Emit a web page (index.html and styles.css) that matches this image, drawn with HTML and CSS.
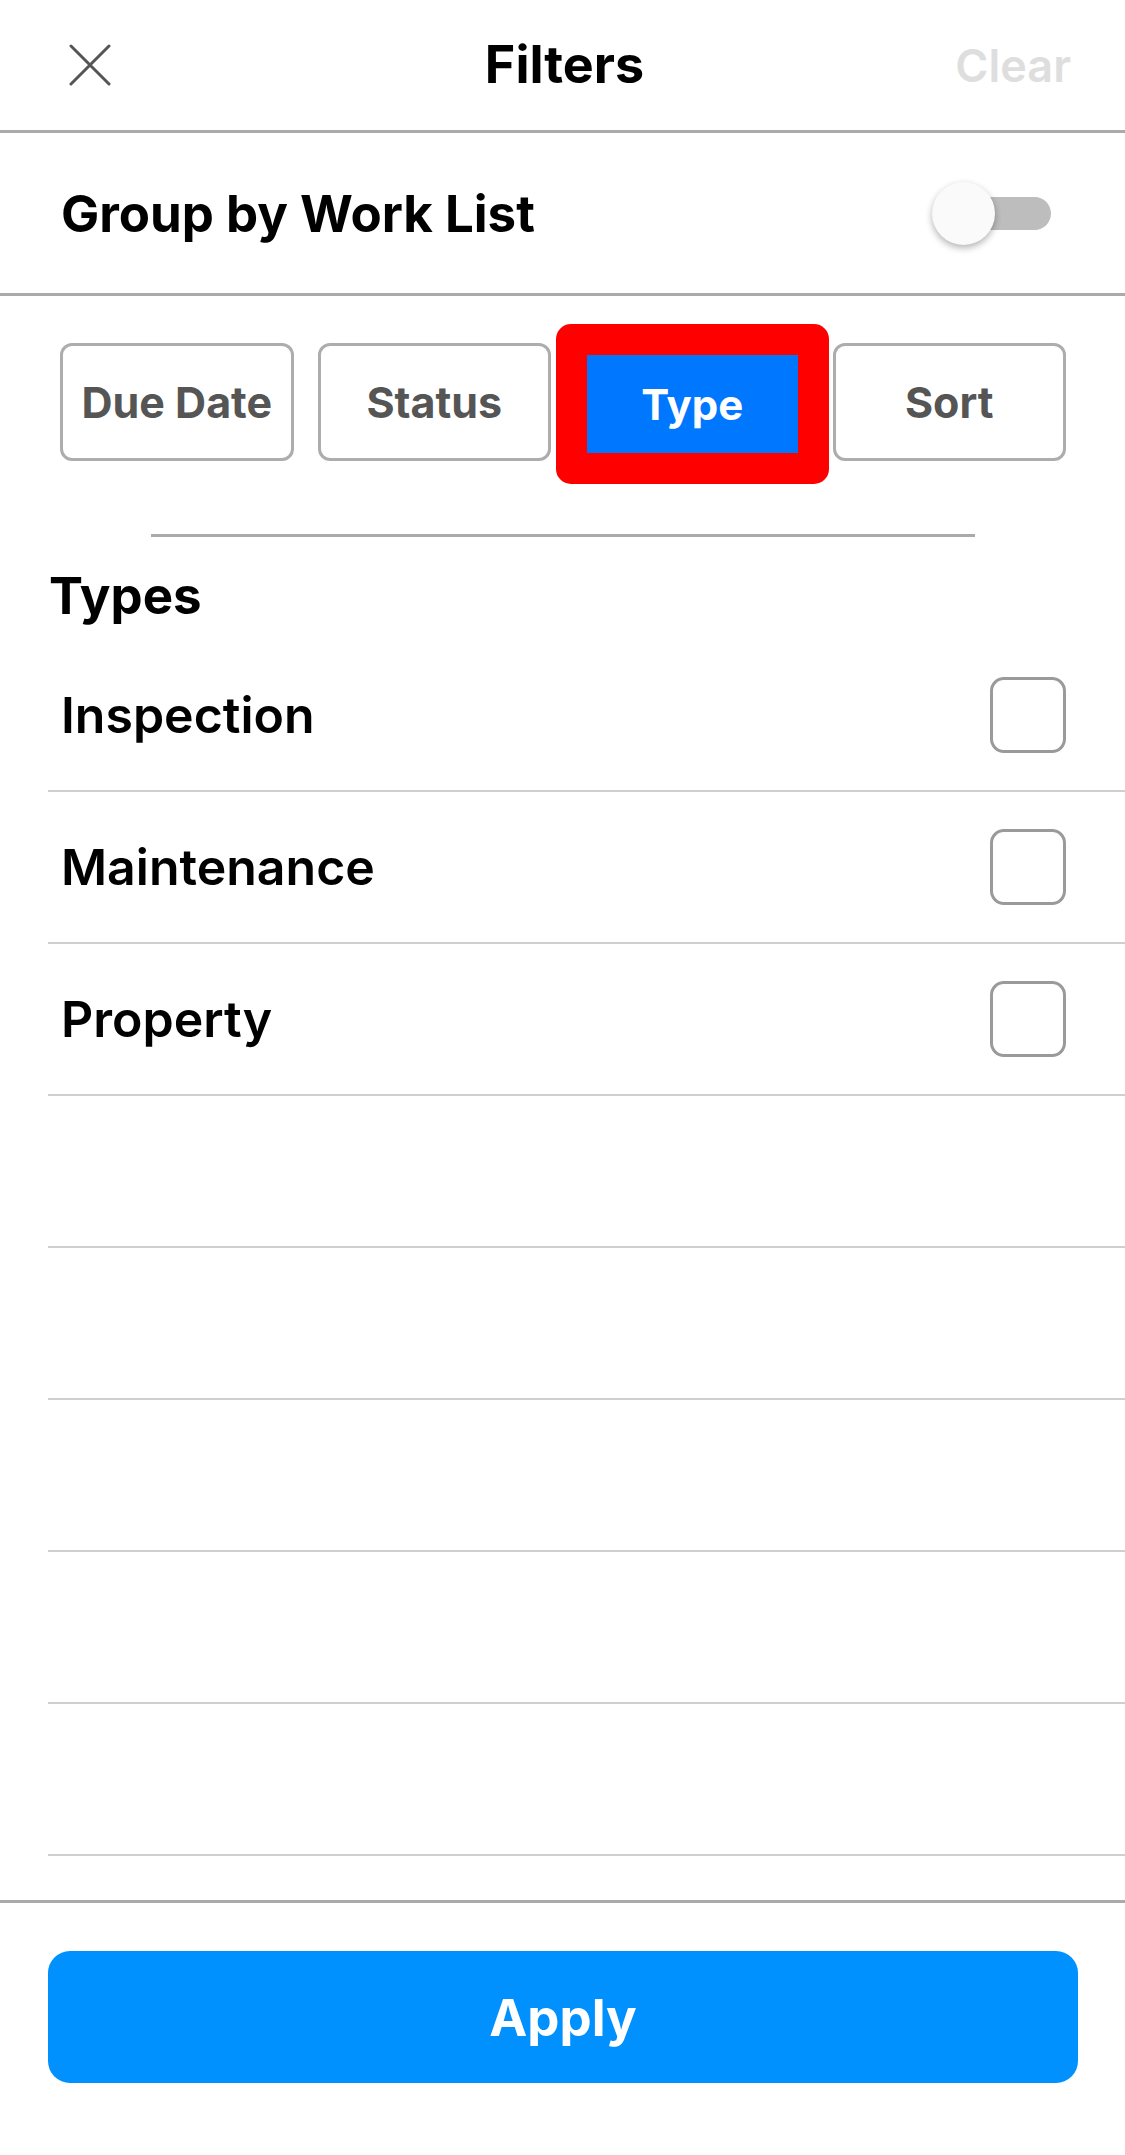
FILE: index.html
```html
<!DOCTYPE html>
<html lang="en">
<head>
<meta charset="utf-8">
<title>Filters</title>
<link rel="stylesheet" href="styles.css">
</head>
<body>
  <header class="topbar">
    <button class="close" aria-label="Close">
      <svg width="42" height="42" viewBox="0 0 42 42"><path d="M2 2 L40 40 M40 2 L2 40" stroke="#555" stroke-width="3" stroke-linecap="round" fill="none"/></svg>
    </button>
    <h1 class="title">Filters</h1>
    <span class="clear">Clear</span>
  </header>

  <section class="group-row">
    <span class="group-label">Group by Work List</span>
    <div class="switch"><span class="track"></span><span class="knob"></span></div>
  </section>

  <nav class="tabs">
    <button class="tab">Due Date</button>
    <button class="tab">Status</button>
    <button class="tab active">Type</button>
    <button class="tab">Sort</button>
  </nav>
  <div class="tabs-rule"></div>

  <h2 class="types-title">Types</h2>

  <ul class="type-list">
    <li class="type-row"><span class="type-label">Inspection</span><span class="checkbox"></span></li>
    <li class="type-row"><span class="type-label">Maintenance</span><span class="checkbox"></span></li>
    <li class="type-row"><span class="type-label">Property</span><span class="checkbox"></span></li>
    <li class="type-row"></li>
    <li class="type-row"></li>
    <li class="type-row"></li>
    <li class="type-row"></li>
    <li class="type-row"></li>
    <li class="type-row"></li>
  </ul>

  <footer class="footer">
    <button class="apply">Apply</button>
  </footer>
</body>
</html>
```

FILE: styles.css
```css
* { box-sizing: border-box; margin: 0; padding: 0; }
html, body { width: 1125px; height: 2155px; }
body {
  font-family: Inter, "Noto Sans", "Liberation Sans", sans-serif;
  background: #fff;
  color: #000;
  display: flex;
  flex-direction: column;
  overflow: hidden;
}
button { font-family: inherit; cursor: pointer; }

.topbar {
  height: 133px;
  flex: none;
  border-bottom: 3px solid #aaa;
  display: grid;
  grid-template-columns: 1fr auto 1fr;
  align-items: center;
  padding: 0 54px 0 58px;
}
.close {
  width: 42px; height: 42px;
  margin-left: 11px;
  background: none; border: 0;
  display: block;
}
.close svg { display: block; }
.title { font-size: 52px; font-weight: 700; line-height: 1.2; }
.clear { justify-self: end; font-size: 45px; font-weight: 600; color: #dedede; }

.group-row {
  height: 163px;
  flex: none;
  border-bottom: 3px solid #aaa;
  display: flex;
  align-items: center;
  justify-content: space-between;
  padding: 0 74px 0 61px;
}
.group-label { font-size: 51px; font-weight: 700; }
.switch { position: relative; width: 119px; height: 63px; }
.track {
  position: absolute; right: 0; top: 15px;
  width: 92px; height: 33px; border-radius: 17px;
  background: #bdbdbd;
}
.knob {
  position: absolute; left: 0; top: 0;
  width: 63px; height: 63px; border-radius: 50%;
  background: #fafafa;
  box-shadow: 0 3px 7px rgba(0,0,0,0.3);
}

.tabs {
  flex: none;
  display: grid;
  grid-template-columns: repeat(4, 1fr);
  gap: 24px;
  padding: 47px 59px 0 60px;
}
.tab {
  height: 118px;
  border: 3px solid #adadad;
  border-radius: 12px;
  background: #fff;
  color: #555;
  font-size: 43px;
  font-weight: 700;
}
.tab.active {
  height: auto;
  border: 31px solid #ff0000;
  border-radius: 15px;
  background: #0077ff;
  color: #fff;
  font-size: 42px;
  margin: -19px -20px -23px -19px;
}

.tabs-rule {
  flex: none;
  width: 824px; height: 3px;
  background: #aaa;
  margin: 73px auto 0;
}

.types-title {
  flex: none;
  height: 103px;
  padding: 13px 0 0 49px;
  display: flex;
  align-items: center;
  font-size: 51px;
  font-weight: 700;
}

.type-list {
  list-style: none;
  flex: 1;
  min-height: 0;
  overflow: hidden;
  margin-left: 48px;
}
.type-row {
  height: 152px;
  border-bottom: 2px solid #cfcfcf;
  display: flex;
  align-items: center;
  justify-content: space-between;
  padding: 0 59px 0 13px;
}
.type-label { font-size: 50px; font-weight: 600; }
.checkbox {
  width: 76px; height: 76px;
  border: 3px solid #9a9a9a;
  border-radius: 14px;
}

.footer {
  flex: none;
  border-top: 3px solid #aaa;
  padding: 48px 47px 72px 48px;
}
.apply {
  display: block;
  width: 100%;
  height: 132px;
  border: 0;
  border-radius: 22px;
  background: #0091ff;
  color: #fff;
  font-size: 51px;
  font-weight: 700;
}
```
